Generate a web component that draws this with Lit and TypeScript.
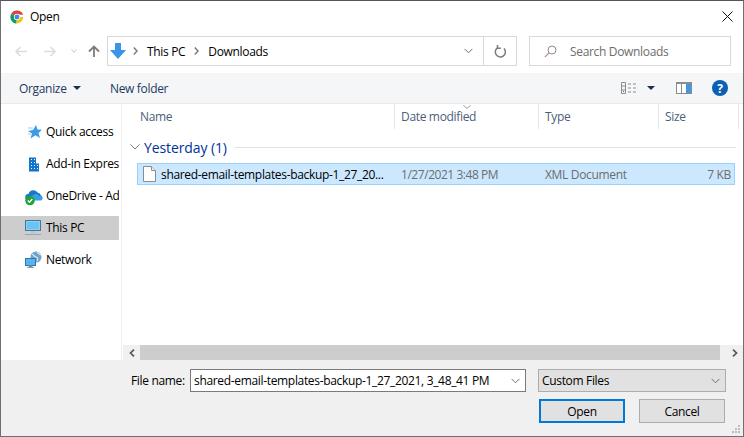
import { LitElement, html, css, svg } from "lit";
import { customElement } from "lit/decorators.js";

const chev = (w: number, c: string) => html`<svg width=${w} height="6" viewBox="0 0 10 6"><path d="M.7.7 5 5 9.300.7" fill="none" stroke=${c} stroke-width="1.100"/></svg>`;
const crumb = html`<svg class="crumb" width="5" height="8" viewBox="0 0 5 8"><path d="M.8.6 4 4 .8 7.400" fill="none" stroke="#7b7b7b" stroke-width="1.500"/></svg>`;
const caret = html`<svg width="8" height="4" viewBox="0 0 8 4"><path d="M0 0h8L4 4z" fill="#1e3050"/></svg>`;

const icons: Record<string, unknown> = {
  star: svg`<path d="M11 2 12.500 6.500 17 6.800 13.500 10 15 15 10.500 12.300 5.500 15.500 7 10.500 3 8 8 7z" fill="#3a9be8"/><path d="M3 5h5M3 11h3" stroke="#9ccdf3" stroke-width="1"/>`,
  building: svg`<path d="M4 2.500h7v6h3v8H4z" fill="#1573c9"/><path d="M6 4h1v1H6zM9 4h1v1H9zM6 7h1v1H6zM9 7h1v1H9zM6 10h1v1H6zM9 10h1v1H9zM6 13h1v1H6zM9 13h1v1H9zM12 10h1v1h-1zM12 13h1v1h-1z" fill="#fff"/>`,
  cloud: svg`<path d="M3 13a3 3 0 0 1 .5-6 5 5 0 0 1 9-1.500 4 4 0 0 1 3.500 3 2.500 2.500 0 0 1 0 4.500z" fill="#1a78c9"/><path d="M7 13.500a2.500 2.500 0 0 1 1-5 3.500 3.500 0 0 1 6 .5 2.400 2.400 0 0 1 2 4.500z" fill="#38a0e8"/><circle cx="5" cy="13.500" r="4.800" fill="#1fa43b"/><path d="M2.800 13.500 4.500 15.200 7.300 12" fill="none" stroke="#fff" stroke-width="1.300"/>`,
  pc: svg`<rect x=".5" y="1.500" width="15" height="10" fill="#8bd2f7" stroke="#43769a"/><path d="M2 3h12v7H2z" fill="#6cc2f0"/><path d="M6 12h4v2H6z" fill="#b8c5ce"/><path d="M0 15.500h16" stroke="#94a8b6" stroke-width="1"/>`,
  net: svg`<circle cx="11" cy="6" r="5.500" fill="#6fa3c9"/><path d="M7 3c2 1 2 3 4 3s2 2 1 4M12 1c1 2 3 2 4 3" fill="none" stroke="#dcebf5" stroke-width="1.200"/><rect x=".5" y="7.500" width="10" height="7" fill="#5ab4ec" stroke="#2f76ae"/><path d="M4 15h3v1H4zM2 16.500h7" stroke="#8aa0b0" stroke-width="1"/>`,
};

@customElement("app-root")
export class AppRoot extends LitElement {
  static styles = css`
    :host { display: block; width: 744px; height: 437px; font: 12px "Open Sans", "Noto Sans", sans-serif; letter-spacing: -.33px; color: #000; }
    * { box-sizing: border-box; }
    .win { width: 744px; height: 437px; border: 1px solid #6f6f6f; border-top-color: #555; background: #fff; display: flex; flex-direction: column; overflow: hidden; }
    .title { height: 31px; flex: none; display: flex; align-items: center; padding: 0 10px 0 9px; gap: 6px; }
    .title span { flex: 1; }
    .addr { height: 41px; flex: none; display: flex; align-items: flex-start; padding: 4px 12px 0 13px; }
    .nav { display: flex; align-items: center; width: 93px; height: 30px; flex: none; }
    .navback { margin-right: 17px; } .navfwd { margin-right: 14px; } .navdown { margin-right: 11px; }
    .abox { width: 410px; height: 30px; border: 1px solid #d9d9d9; display: flex; align-items: center; padding-left: 2px; flex: none; }
    .abox .t { margin-right: 2px; }
    .crumb { flex: none; margin-left: 7px; }
    .crumb + .t { margin-left: 9px; }
    .grow { flex: 1; }
    .adrop { display: flex; width: 20px; margin-right: 5px; justify-content: center; }
    .refresh { width: 33px; height: 28px; border-left: 1px solid #d9d9d9; display: flex; align-items: center; justify-content: center; }
    .sbox { width: 202px; height: 30px; margin-left: 12px; border: 1px solid #d9d9d9; display: flex; align-items: center; padding-left: 14px; gap: 13px; color: #6d6d6d; }
    .tools { height: 30px; flex: none; background: #f5f6f7; display: flex; align-items: center; padding-left: 18px; color: #1e3a5f; }
    .org { display: flex; align-items: center; gap: 6px; width: 91px; }
    .rt { margin-left: auto; display: flex; align-items: center; padding-right: 15px; }
    .rt .v { margin-right: 10px; } .rt .c { display: flex; margin-right: 21px; } .rt .p { margin-right: 20px; }
    .body { flex: 1; min-height: 0; display: flex; border-top: 1px solid #e9e9e9; }
    .side { width: 121px; flex: none; padding-top: 16px; border-right: 1px solid #f0f0f0; }
    .si { height: 24px; margin-bottom: 8px; width: 118px; display: flex; align-items: center; padding-left: 24px; gap: 2px; white-space: nowrap; overflow: hidden; }
    .si svg { flex: none; }
    .si span { margin-top: -2px; }
    .si.on { background: #cdcdcd; }
    .main { flex: 1; min-width: 0; display: flex; flex-direction: column; }
    .list { flex: 1; min-height: 0; position: relative; }
    .head { display: grid; grid-template-columns: 273px 144px 120px 80px; height: 25px; color: #4c607a; }
    .hc { border-right: 1px solid #e5e5e5; padding: 4px 0 0 6px; line-height: 17px; }
    .hc.first { padding-left: 18px; }
    .sort { position: absolute; left: 341px; top: 1px; }
    .group { display: flex; align-items: center; margin: 8px 7px 0 8px; height: 20px; color: #003399; font-size: 14px; letter-spacing: -.1px; }
    .group svg { margin-right: 4px; }
    .group i { flex: 1; height: 1px; background: #e2e2e2; margin-left: 7px; }
    .row { margin: 6px 8px 0 15px; height: 22px; border: 1px solid #99d1ff; background: #cce8ff; display: grid; grid-template-columns: 263px 144px 120px 1fr; align-items: center; }
    .name { display: flex; align-items: center; gap: 5px; padding-left: 5px; white-space: nowrap; }
    .dim { color: #6d6d6d; }
    .date { letter-spacing: -.45px; }
    .size { color: #6d6d6d; text-align: right; padding-right: 3px; margin-left: -40px; }
    .hbar { height: 15px; flex: none; margin-left: 1px; display: flex; align-items: center; background: #f0f0f0; }
    .hbar .arrow { width: 17px; display: flex; justify-content: center; }
    .hbar .arrow.r { width: 23px; justify-content: flex-end; padding-right: 5px; }
    .hbar .track { flex: 1; height: 15px; background: #cdcdcd; }
    .foot { height: 76px; flex: none; background: #f0f0f0; padding: 9px 17px 0 130px; display: grid; grid-template-columns: 59px 336px 200px; grid-template-rows: 23px 24px; row-gap: 7px; position: relative; }
    .lab { align-self: center; }
    .input { border: 1px solid #7a7a7a; background: #fff; display: flex; align-items: center; padding: 0 5px 0 3px; white-space: nowrap; overflow: hidden; justify-content: space-between; }
    .filter { margin-left: 12px; border: 1px solid #adadad; background: #e1e1e1; display: flex; align-items: center; justify-content: space-between; padding: 0 5px 0 3px; }
    .btns { grid-column: 1 / -1; display: flex; justify-content: flex-end; gap: 14px; margin-right: 1px; }
    .btn { width: 86px; height: 24px; border: 1px solid #adadad; background: #e1e1e1; display: flex; align-items: center; justify-content: center; }
    .btn.pri { border: 2px solid #0078d7; }
    .grip { position: absolute; right: 2px; bottom: 2px; }
  `;

  private side(icon: string, label: string, on = false) {
    return html`<div class="si ${on ? "on" : ""}"><svg width="19" height="19" viewBox="0 0 19 19">${icons[icon]}</svg><span>${label}</span></div>`;
  }

  render() {
    return html`<div class="win">
      <div class="title">
        <svg width="14" height="14" viewBox="0 0 16 16">
          <path d="M8 8 1.500 4.200A7.500 7.500 0 0 1 15 5.500H8z" fill="#db4437"/>
          <path d="M8 8H15A7.500 7.500 0 0 1 7 15.500z" fill="#f4c20d"/>
          <path d="M8 8 7 15.500A7.500 7.500 0 0 1 1.500 4.200z" fill="#0f9d58"/>
          <circle cx="8" cy="8" r="3.600" fill="#fff"/><circle cx="8" cy="8" r="2.800" fill="#4285f4"/>
        </svg>
        <span>Open</span>
        <svg width="11" height="11" viewBox="0 0 11 11"><path d="M.5.500 10.500 10.500M10.500.500.5 10.500" stroke="#111" stroke-width="1"/></svg>
      </div>
      <div class="addr">
        <div class="nav">
          <svg class="navback" width="13" height="11" viewBox="0 0 13 11"><path d="M13 5.500H2M6.500 1 2 5.500 6.500 10" fill="none" stroke="#dcdcdc" stroke-width="1.600"/></svg>
          <svg class="navfwd" width="13" height="11" viewBox="0 0 13 11"><path d="M0 5.500H11M6.500 1 11 5.500 6.500 10" fill="none" stroke="#dcdcdc" stroke-width="1.600"/></svg>
          <svg class="navdown" width="6" height="4" viewBox="0 0 6 4"><path d="M.4.400 3 3.200 5.600.4" fill="none" stroke="#d8d8d8" stroke-width="1.200"/></svg>
          <svg width="12" height="12" viewBox="0 0 12 12"><path d="M6 12V2M1 6.500 6 1.500 11 6.500" fill="none" stroke="#7c7c7c" stroke-width="1.800"/></svg>
        </div>
        <div class="abox">
          <svg width="16" height="16" viewBox="0 0 16 16"><path d="M5 0h6v7h5l-8 9-8-9h5z" fill="#3a95e4"/></svg>
          ${crumb}<span class="t">This PC</span>${crumb}<span class="t">Downloads</span>
          <span class="grow"></span>
          <span class="adrop">${chev(9, "#6d6d6d")}</span>
          <div class="refresh"><svg width="12" height="13" viewBox="0 0 12 13"><path d="M4 2.500A5 5 0 1 0 10 3.500M3.500 0v3.200h3.300" fill="none" stroke="#7c7c7c" stroke-width="1.500"/></svg></div>
        </div>
        <div class="sbox">
          <svg width="13" height="13" viewBox="0 0 13 13"><circle cx="8" cy="5" r="4" fill="none" stroke="#8c8c8c"/><path d="M5 8 .8 12.200" stroke="#b48a8a" stroke-width="1.100"/></svg>
          <span>Search Downloads</span>
        </div>
      </div>
      <div class="tools">
        <div class="org"><span>Organize</span>${caret}</div>
        <div>New folder</div>
        <div class="rt">
          <svg class="v" width="16" height="12" viewBox="0 0 16 12"><path d="M.5.500h4v11h-4zM.5 4h4M.5 8h4" fill="none" stroke="#8c8c8c"/><path d="M7 2h3M12 2h3M7 6h3M12 6h3M7 10h3M12 10h3" stroke="#8c8c8c"/><path d="M2 9h1v1H2z" fill="#b05050"/></svg>
          <span class="c">${caret}</span>
          <svg class="p" width="16" height="12" viewBox="0 0 16 12"><path d="M0 0h16v12H0z" fill="#8c8c8c"/><path d="M1 2h4v9H1zM6 2h4v9H6z" fill="#fff"/><path d="M10 2h5v9h-5z" fill="#3f97e6"/></svg>
          <svg width="16" height="16" viewBox="0 0 16 16"><circle cx="8" cy="8" r="8" fill="#0b5fb5"/><text x="8" y="12.500" text-anchor="middle" font-family="Open Sans, sans-serif" font-weight="700" font-size="12" fill="#fff">?</text></svg>
        </div>
      </div>
      <div class="body">
        <div class="side">
          ${this.side("star", "Quick access")}
          ${this.side("building", "Add-in Express")}
          ${this.side("cloud", "OneDrive - Add-in")}
          ${this.side("pc", "This PC", true)}
          ${this.side("net", "Network")}
        </div>
        <div class="main">
          <div class="list">
            <div class="head">
              <div class="hc first">Name</div><div class="hc">Date modified</div><div class="hc">Type</div><div class="hc">Size</div>
            </div>
            <svg class="sort" width="8" height="4" viewBox="0 0 8 4"><path d="M.4.400 4 3.400 7.600.4" fill="none" stroke="#9a9a9a"/></svg>
            <div class="group">
              <svg width="10" height="6" viewBox="0 0 10 6"><path d="M.4.400 5 5 9.600.4" fill="none" stroke="#7e7e7e"/></svg>
              <span>Yesterday (1)</span><i></i>
            </div>
            <div class="row">
              <div class="name">
                <svg width="13" height="16" viewBox="0 0 13 16"><path d="M.5.500h8l4 4v11H.5z" fill="#fff" stroke="#8c8c8c"/><path d="M8.500.500v4h4" fill="#eee" stroke="#8c8c8c"/></svg>
                <span>shared-email-templates-backup-1_27_20...</span>
              </div>
              <div class="dim date">1/27/2021 3:48 PM</div>
              <div class="dim">XML Document</div>
              <div class="size">7 KB</div>
            </div>
          </div>
          <div class="hbar">
            <span class="arrow"><svg width="6" height="8" viewBox="0 0 6 8"><path d="M5 .7 1.500 4 5 7.300" fill="none" stroke="#555" stroke-width="1.700"/></svg></span>
            <div class="track"></div>
            <span class="arrow r"><svg width="6" height="8" viewBox="0 0 6 8"><path d="M1 .7 4.500 4 1 7.300" fill="none" stroke="#555" stroke-width="1.700"/></svg></span>
          </div>
        </div>
      </div>
      <div class="foot">
        <div class="lab">File name:</div>
        <div class="input"><span>shared-email-templates-backup-1_27_2021, 3_48_41 PM</span>${chev(9, "#6d6d6d")}</div>
        <div class="filter"><span>Custom Files</span>${chev(9, "#6d6d6d")}</div>
        <div class="btns"><div class="btn pri">Open</div><div class="btn">Cancel</div></div>
        <svg class="grip" width="9" height="9" viewBox="0 0 9 9"><path d="M6 0h2v2H6zM3 3h2v2H3zM6 3h2v2H6zM0 6h2v2H0zM3 6h2v2H3zM6 6h2v2H6z" fill="#bdbdbd"/></svg>
      </div>
    </div>`;
  }
}
